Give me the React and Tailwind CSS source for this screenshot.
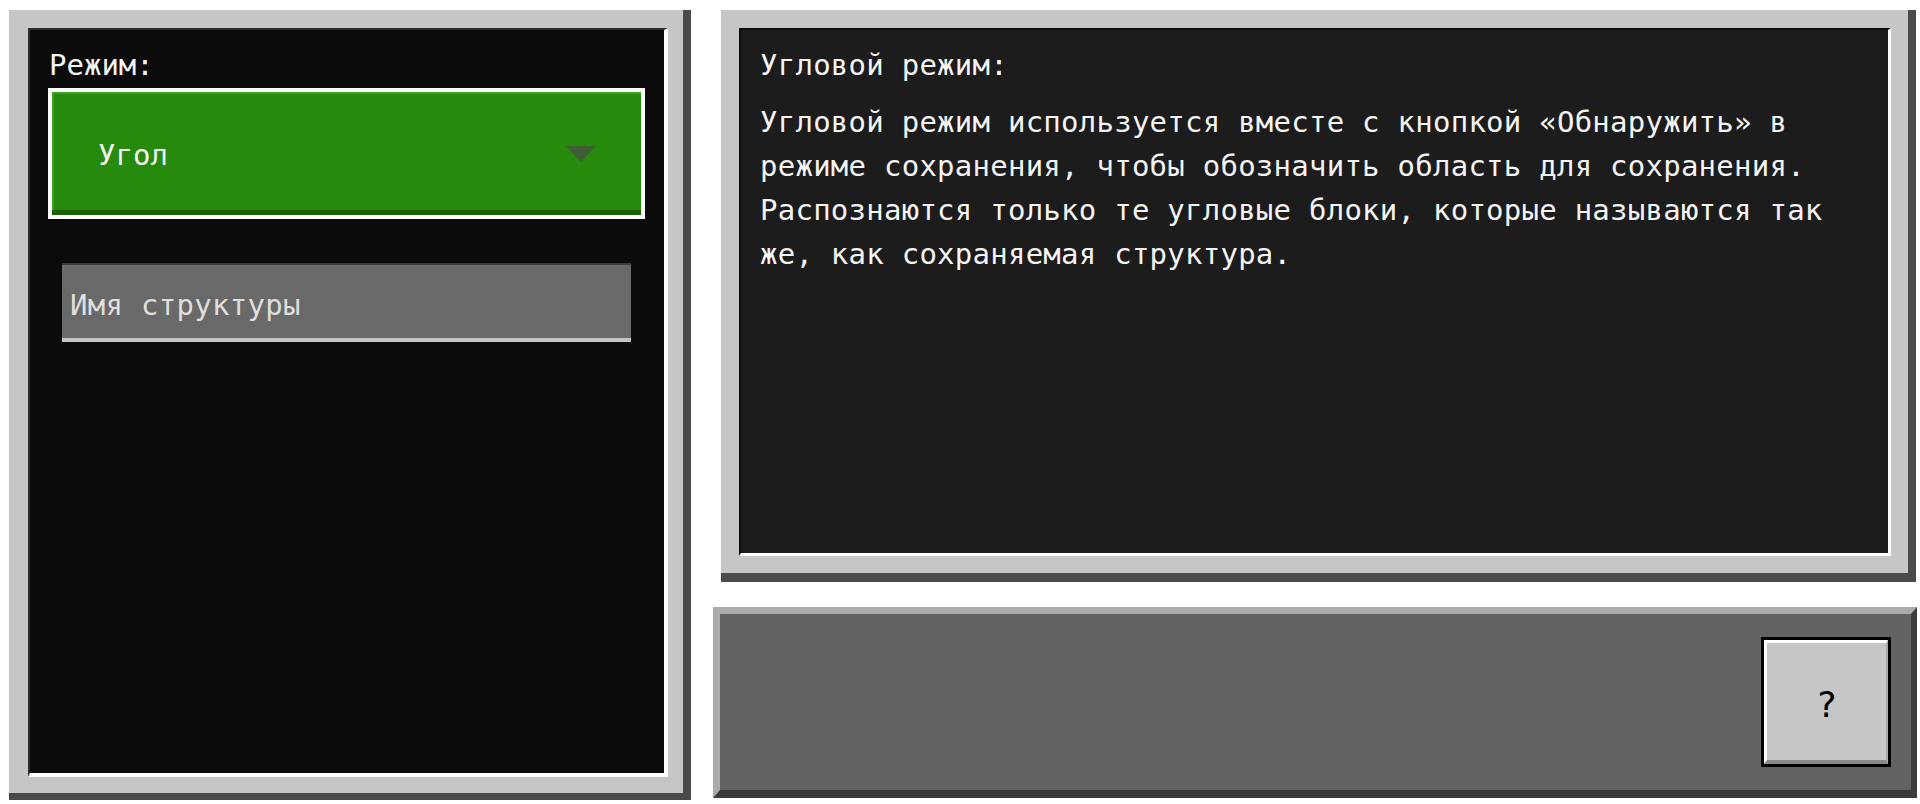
const mono = "font-['DejaVu_Sans_Mono','Liberation_Mono',monospace]";

function DropDown() {
  return (
    <div className="mt-[5px] h-[131px] border-4 border-white bg-[#268a0d] flex flex-col">
      <div className="flex-1 flex items-center border-t-2 border-l-2 border-[#3ba320] pl-[44px] pr-[45px] pt-[8px]">
        <span className="flex-1 text-[29px] text-[#f2f2f2]">Угол</span>
        <svg width="30" height="16" viewBox="0 0 30 16" className="mt-[-4px]">
          <polygon points="0,0 30,0 15,16" fill="#3f5e38" />
        </svg>
      </div>
      <div className="h-[5px] bg-[#1b5f08]" />
    </div>
  );
}

function NameField() {
  return (
    <div className="mt-[44px] mx-[14px] h-[79px] bg-[#696969] border-t-2 border-[#3c3c3c] border-b-4 border-b-[#c3c3c3] flex items-center pl-[8px] pt-[8px]">
      <span className="text-[29px] tracking-[0.3px] text-[#dedede]">Имя структуры</span>
    </div>
  );
}

function LeftPanel() {
  return (
    <div className="w-[682px] h-[790px] shrink-0 bg-[#c6c6c6] border-r-[8px] border-b-[7px] border-[#4a4a4a] pl-[19px] pt-[18px] pr-[15px] pb-[16px] flex">
      <div className="flex-1 bg-[#0b0b0b] border-t-2 border-l-2 border-t-[#2c2c2c] border-l-[#2c2c2c] border-r-4 border-b-4 border-r-white border-b-white pl-[18px] pr-[19px] pt-[17px]">
        <div className="ml-[1px] text-[29px] leading-[36px] text-[#f4f4f4]">Режим:</div>
        <DropDown />
        <NameField />
      </div>
    </div>
  );
}

const lines = [
  'Угловой режим используется вместе с кнопкой «Обнаружить» в',
  'режиме сохранения, чтобы обозначить область для сохранения.',
  'Распознаются только те угловые блоки, которые называются так',
  'же, как сохраняемая структура.',
];

function InfoPanel() {
  return (
    <div className="ml-[8px] mr-[1px] h-[572px] bg-[#c6c6c6] border-r-[8px] border-b-[9px] border-[#4a4a4a] pl-[18px] pt-[18px] pr-[17px] pb-[17px] flex">
      <div className="flex-1 bg-[#1c1c1c] border-t-2 border-l-2 border-t-[#0c0c0c] border-l-[#0c0c0c] border-r-[3px] border-b-[3px] border-r-white border-b-white pl-[19px] pt-[13px] text-[29px] leading-[44px] tracking-[0.25px] text-[#f4f4f4] whitespace-pre">
        <div>Угловой режим:</div>
        <div className="mt-[13px]">
          {lines.map((l) => (
            <div key={l}>{l}</div>
          ))}
        </div>
      </div>
    </div>
  );
}

function BottomBar() {
  return (
    <div className="mt-[25px] h-[191px] bg-[#626262] border-t-[7px] border-l-[7px] border-t-[#ababab] border-l-[#ababab] border-b-[8px] border-r-[6px] border-b-[#3b3b3b] border-r-[#3b3b3b] flex justify-end pt-[23px] pr-[20px]">
      <button className="w-[130px] h-[130px] border-[3px] border-black bg-[#c6c6c6] flex">
        <div className="flex-1 border-t-[3px] border-l-[3px] border-white border-b-[4px] border-b-[#8a8a8a] border-r-2 border-r-[#a8a8a8] flex items-center justify-center pt-[6px]">
          <span className="text-[36px] text-black leading-none">?</span>
        </div>
      </button>
    </div>
  );
}

export default function App() {
  return (
    <div className={`w-[1920px] h-[804px] bg-white flex pt-[10px] pl-[9px] gap-[22px] overflow-hidden ${mono}`}>
      <LeftPanel />
      <div className="flex-1 flex flex-col pr-[3px]">
        <InfoPanel />
        <BottomBar />
      </div>
    </div>
  );
}
